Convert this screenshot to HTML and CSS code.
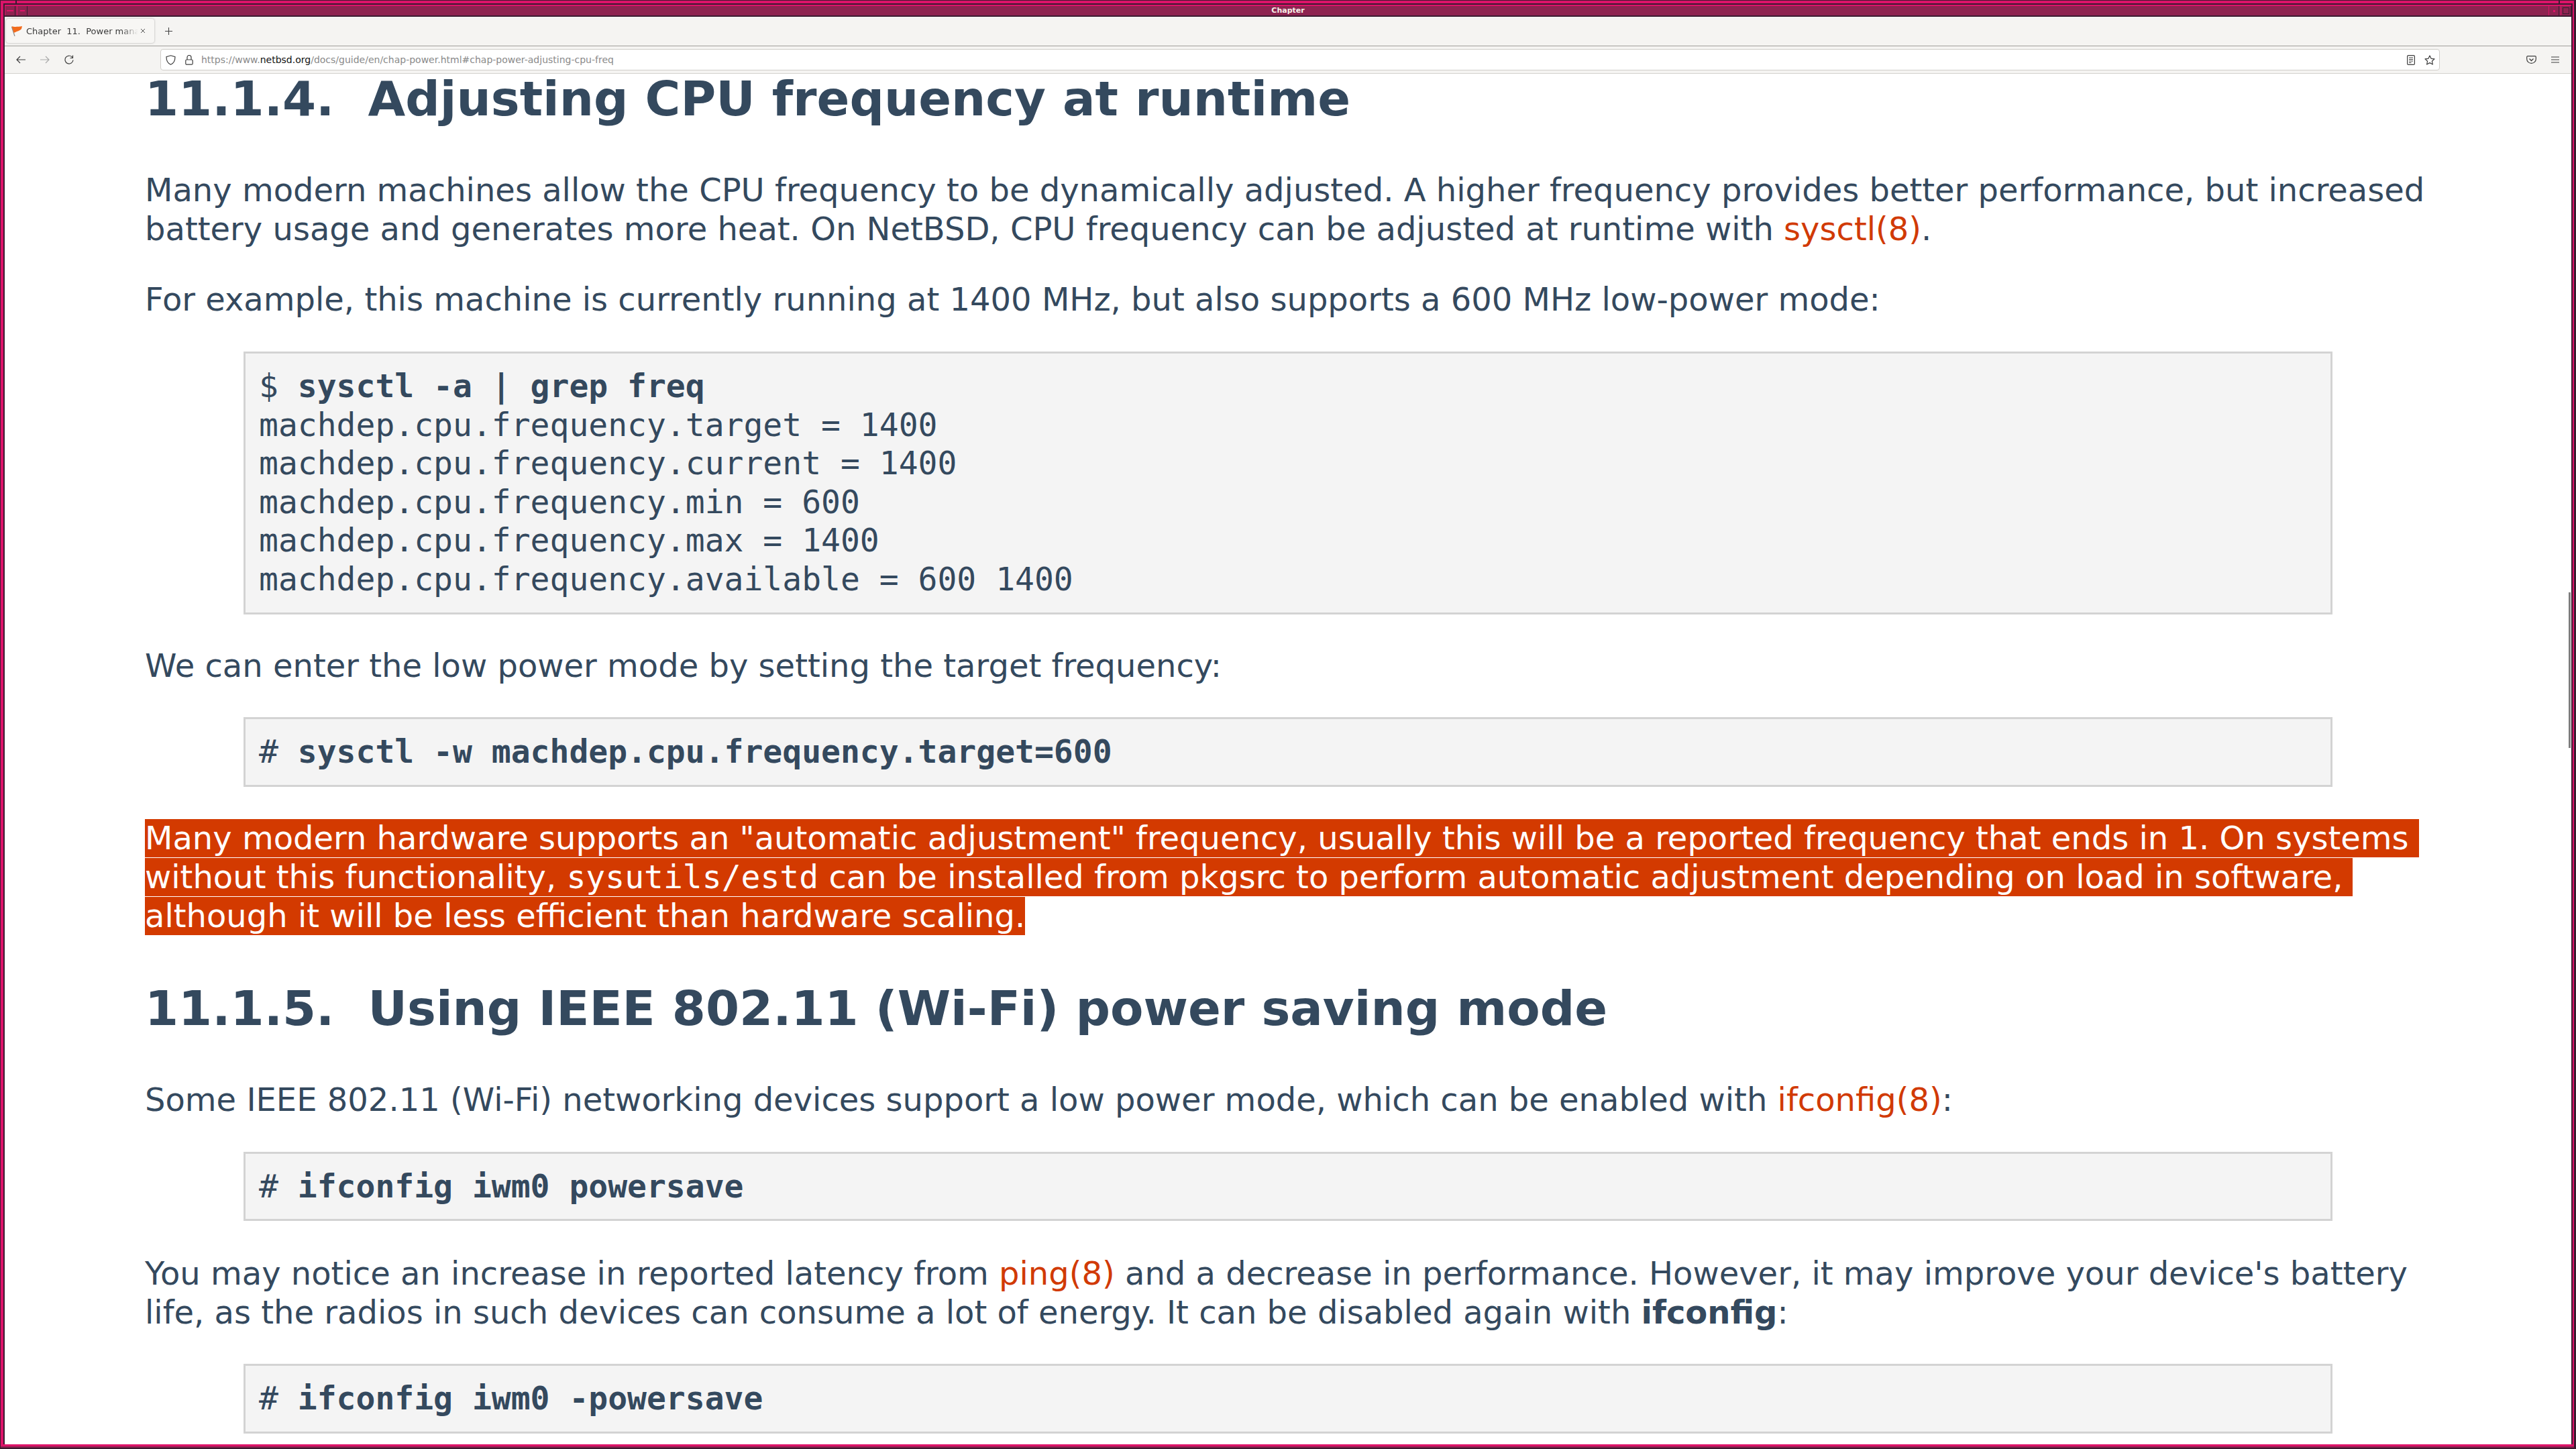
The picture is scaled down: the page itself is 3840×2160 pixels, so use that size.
FILE: index.html
```html
<!DOCTYPE html>
<html lang="en">
<head>
  <meta charset="UTF-8" />
  <title>Chapter 11. Power management</title>
  <link rel="stylesheet" href="styles.css">
</head>
<body>
  <div class="window">
    <div class="frame">
      <div class="titlebar">
        <div class="wm-btn"><span class="wm-dash"></span></div>
        <div class="wm-btn"><span class="wm-dash small"></span></div>
        <div class="wm-title">Chapter</div>
        <div class="wm-btn"><span class="wm-dot"></span></div>
        <div class="wm-btn"><span class="wm-square"></span></div>
      </div>
      <div class="browser">
        <div class="tabstrip">
          <div class="tab">
            <svg class="favicon" width="16" height="16" viewBox="0 0 16 16">
              <path d="M0.5 2 L5 16" stroke="#8a8a8a" stroke-width="1.2" fill="none"/>
              <path d="M0.5 1 C4 2.5 9 2 16 1 L15 5 C13 8 8 8.5 3.6 11 Z" fill="#f26b1d"/>
            </svg>
            <span class="tab-title">Chapter  11.  Power management</span>
            <svg class="tab-close" width="8" height="8" viewBox="0 0 8 8"><path d="M1 1 L7 7 M7 1 L1 7" stroke="#555" fill="none"/></svg>
          </div>
          <svg class="new-tab" width="11" height="11" viewBox="0 0 11 11"><path d="M5.5 0 V11 M0 5.5 H11" stroke="#444" stroke-width="1.1" fill="none"/></svg>
        </div>
        <div class="toolbar">
          <svg class="nav-icon" width="14" height="12" viewBox="0 0 14 12"><path d="M14 6 H1 M6 1 L1 6 L6 11" stroke="#3d3d3d" stroke-width="1.2" fill="none"/></svg>
          <svg class="nav-icon" width="14" height="12" viewBox="0 0 14 12"><path d="M0 6 H13 M8 1 L13 6 L8 11" stroke="#a9a9a9" stroke-width="1.2" fill="none"/></svg>
          <svg class="nav-icon" width="14" height="14" viewBox="0 0 14 14"><path d="M11.8 3.4 A6 6 0 1 0 13 7.5 M12.5 0.5 V4.5 H8.5" stroke="#3d3d3d" stroke-width="1.2" fill="none"/></svg>
          <div class="urlbar">
            <svg class="url-icon shield" width="15" height="15" viewBox="0 0 15 15"><path d="M7.5 0.8 L14 2.8 C14 8.5 12 12.5 7.5 14.3 C3 12.5 1 8.5 1 2.8 Z" stroke="#3d3d3d" stroke-width="1.2" fill="none"/></svg>
            <svg class="url-icon lock" width="12" height="15" viewBox="0 0 12 15"><path d="M3 7 V3.5 A3 3 0 0 1 9 3.5 V7" stroke="#3d3d3d" stroke-width="1.2" fill="none"/><rect x="0.8" y="7" width="10.4" height="7.2" rx="1.5" stroke="#3d3d3d" stroke-width="1.2" fill="none"/></svg>
            <span class="url">https://www.<b>netbsd.org</b>/docs/guide/en/chap-power.html#chap-power-adjusting-cpu-freq</span>
            <svg class="url-action" width="12" height="15" viewBox="0 0 12 15"><rect x="0.6" y="0.6" width="10.8" height="13.8" rx="1.5" stroke="#3d3d3d" stroke-width="1.2" fill="none"/><path d="M3 4 H9 M3 6.5 H9 M3 9 H9 M3 11.5 H6.5" stroke="#3d3d3d" stroke-width="1" fill="none"/></svg>
            <svg class="url-action star" width="16" height="15" viewBox="0 0 16 15"><path d="M8 1 L10.1 5.3 L15 5.9 L11.4 9.2 L12.4 14 L8 11.6 L3.6 14 L4.6 9.2 L1 5.9 L5.9 5.3 Z" stroke="#3d3d3d" stroke-width="1.2" fill="none" stroke-linejoin="round"/></svg>
          </div>
          <svg class="tool-icon pocket" width="15" height="12" viewBox="0 0 15 12"><path d="M2 0.7 H13 A1.3 1.3 0 0 1 14.3 2 V5 C14.3 9 11 11.3 7.5 11.3 C4 11.3 0.7 9 0.7 5 V2 A1.3 1.3 0 0 1 2 0.7 Z" stroke="#3d3d3d" stroke-width="1.2" fill="none"/><path d="M4.5 4.5 L7.5 7.5 L10.5 4.5" stroke="#3d3d3d" stroke-width="1.3" fill="none"/></svg>
          <svg class="tool-icon" width="12" height="10" viewBox="0 0 12 10"><path d="M0 1 H12 M0 5 H12 M0 9 H12" stroke="#3d3d3d" stroke-width="1.1" fill="none"/></svg>
        </div>
        <div class="viewport">
          <div class="content">
            <h2>11.1.4.&nbsp; Adjusting CPU frequency at runtime</h2>
            <p>Many modern machines allow the CPU frequency to be dynamically adjusted. A higher frequency provides better performance, but increased battery usage and generates more heat. On NetBSD, CPU frequency can be adjusted at runtime with <a href="#">sysctl(8)</a>.</p>
            <p>For example, this machine is currently running at 1400 MHz, but also supports a 600 MHz low-power mode:</p>
            <pre>$ <b>sysctl -a | grep freq</b>
machdep.cpu.frequency.target = 1400
machdep.cpu.frequency.current = 1400
machdep.cpu.frequency.min = 600
machdep.cpu.frequency.max = 1400
machdep.cpu.frequency.available = 600 1400</pre>
            <p>We can enter the low power mode by setting the target frequency:</p>
            <pre># <b>sysctl -w machdep.cpu.frequency.target=600</b></pre>
            <p>
              <span class="selected">Many modern hardware supports an "automatic adjustment" frequency, usually this will be a reported frequency that ends in 1. On systems</span>
              <span class="selected">without this functionality, <code>sysutils/estd</code> can be installed from pkgsrc to perform automatic adjustment depending on load in software,</span>
              <span class="selected">although it will be less efficient than hardware scaling.</span>
            </p>
            <h2>11.1.5.&nbsp; Using IEEE 802.11 (Wi-Fi) power saving mode</h2>
            <p>Some IEEE 802.11 (Wi-Fi) networking devices support a low power mode, which can be enabled with <a href="#">ifconfig(8)</a>:</p>
            <pre class="wifi-on"># <b>ifconfig iwm0 powersave</b></pre>
            <p>You may notice an increase in reported latency from <a href="#">ping(8)</a> and a decrease in performance. However, it may improve your device's battery life, as the radios in such devices can consume a lot of energy. It can be disabled again with <b>ifconfig</b>:</p>
            <pre># <b>ifconfig iwm0 -powersave</b></pre>
          </div>
          <div class="scroll-thumb"></div>
        </div>
      </div>
    </div>
  </div>
</body>
</html>
```
FILE: styles.css
```css
html, body {
  margin: 0;
  padding: 0;
  height: 100%;
  overflow: hidden;
}
body {
  background-color: #3b1a30;
}
.window {
  height: 2160px;
  box-sizing: border-box;
  padding: 1px 3px 4px 1px;
  display: flex;
  background-color: #3b1a30;
}
.frame {
  flex: 1;
  min-width: 0;
  display: flex;
  flex-direction: column;
  position: relative;
  border-style: solid;
  border-color: #dd1369;
  border-width: 4px 2px 3px 4px;
  padding: 2px 2px 0 2px;
  background-color: #3b1a30;
  box-shadow: 0 2px 0 #8e2350;
}
/* corner grips cut through the top border */
.frame::before,
.frame::after {
  content: "";
  position: absolute;
  top: -4px;
  width: 2px;
  height: 4px;
  background-color: #3b1a30;
}
.frame::before {
  left: 18px;
}
.frame::after {
  right: 19px;
}
.titlebar {
  height: 18px;
  flex: none;
  display: flex;
  gap: 2px;
  box-sizing: border-box;
  background-color: #8e2350;
  border-top: 2px solid #dd1369;
  border-bottom: 2px solid #3b1a30;
}
.wm-title {
  flex: 1;
  text-align: center;
  color: #f6f0e8;
  font-family: "DejaVu Sans", sans-serif;
  font-weight: bold;
  font-size: 11px;
  line-height: 14px;
}
.wm-btn {
  width: 16px;
  flex: none;
  display: flex;
  align-items: center;
  justify-content: center;
  box-sizing: border-box;
  border-left: 1px solid #dd1369;
  border-right: 1px solid #3b1a30;
}
.wm-dash {
  width: 10px;
  height: 2px;
  background-color: #dd1369;
}
.wm-dash.small {
  width: 7px;
}
.wm-dot {
  width: 3px;
  height: 3px;
  background-color: #dd1369;
}
.wm-square {
  width: 8px;
  height: 8px;
  border: 1px solid #3b1a30;
}
.browser {
  flex: 1;
  display: flex;
  flex-direction: column;
  min-height: 0;
  background-color: #fff;
}
.tabstrip {
  height: 44px;
  flex: none;
  display: flex;
  align-items: center;
  box-sizing: border-box;
  padding: 0 0 1px 2px;
  background-color: #f5f4f2;
  border-bottom: 1px solid #a09e9a;
}
.tab {
  width: 221px;
  height: 36px;
  display: flex;
  align-items: center;
  box-sizing: border-box;
  padding: 0 13px 0 8px;
  background-color: #f7f6f4;
  border-radius: 4px;
  box-shadow: 0 0 3px rgba(0,0,0,0.3);
}
.favicon {
  flex: none;
}
.tab-title {
  flex: 1;
  min-width: 0;
  overflow: hidden;
  white-space: pre;
  font-family: "DejaVu Sans", sans-serif;
  font-size: 13px;
  color: #3a3a3a;
  margin: 0 3px 0 6px;
  -webkit-mask-image: linear-gradient(to right, #000 85%, transparent);
}
.tab-close {
  flex: none;
}
.new-tab {
  margin-left: 16px;
}
.toolbar {
  height: 41px;
  flex: none;
  display: flex;
  align-items: center;
  box-sizing: border-box;
  padding: 0 0 0 17px;
  background-color: #f5f4f2;
  border-bottom: 1px solid #d4d2ce;
}
.nav-icon {
  margin-right: 22px;
  flex: none;
}
.nav-icon:nth-child(3) {
  margin-right: 0;
}
.urlbar {
  margin-left: 129px;
  width: 3398px;
  height: 32px;
  flex: none;
  display: flex;
  align-items: center;
  box-sizing: border-box;
  padding: 0 6px 0 7px;
  background-color: #fff;
  border: 1px solid #cfcdc9;
  border-radius: 4px;
}
.url-icon {
  flex: none;
}
.shield {
  margin-right: 14px;
}
.lock {
  margin-right: 12px;
}
.url {
  flex: 1;
  font-family: "DejaVu Sans", sans-serif;
  font-size: 14px;
  color: #8a8a8a;
}
.url b {
  font-weight: normal;
  color: #111;
}
.star {
  margin-left: 14px;
}
.tool-icon {
  margin-left: 22px;
  flex: none;
}
.pocket {
  margin-left: 129px;
}
.viewport {
  flex: 1;
  min-height: 0;
  overflow: hidden;
  position: relative;
  background-color: #fff;
}
.content {
  margin-top: -6px;
  width: 3408px;
  margin-left: 209px;
  font-family: "DejaVu Sans", sans-serif;
  font-size: 48px;
  line-height: 57.6px;
  color: #34495e;
}
h2 {
  font-size: 72px;
  line-height: 86.4px;
  margin: 66px 0 64.8px;
  font-weight: bold;
}
h2:first-child {
  margin-top: 0;
}
p {
  margin: 0 0 48px;
}
a {
  color: #d13a05;
  text-decoration: none;
}
pre {
  font-family: "DejaVu Sans Mono", monospace;
  font-size: 48px;
  line-height: 57.6px;
  margin: 0 147px 48px;
  padding: 20px;
  background-color: #f4f4f4;
  border: 3px solid #d3d3d3;
}
pre.wifi-on {
  margin-bottom: 50px;
}
code {
  font-family: "DejaVu Sans Mono", monospace;
}
.selected {
  display: block;
  width: fit-content;
  line-height: 57px;
  margin-bottom: 1px;
  padding-right: 15px;
  background-color: #d33a00;
  color: #fff;
}
.selected:last-child {
  padding-right: 0;
}
.scroll-thumb {
  position: absolute;
  top: 773px;
  right: 1px;
  width: 3px;
  height: 232px;
  background-color: #7f7f7f;
}
```
